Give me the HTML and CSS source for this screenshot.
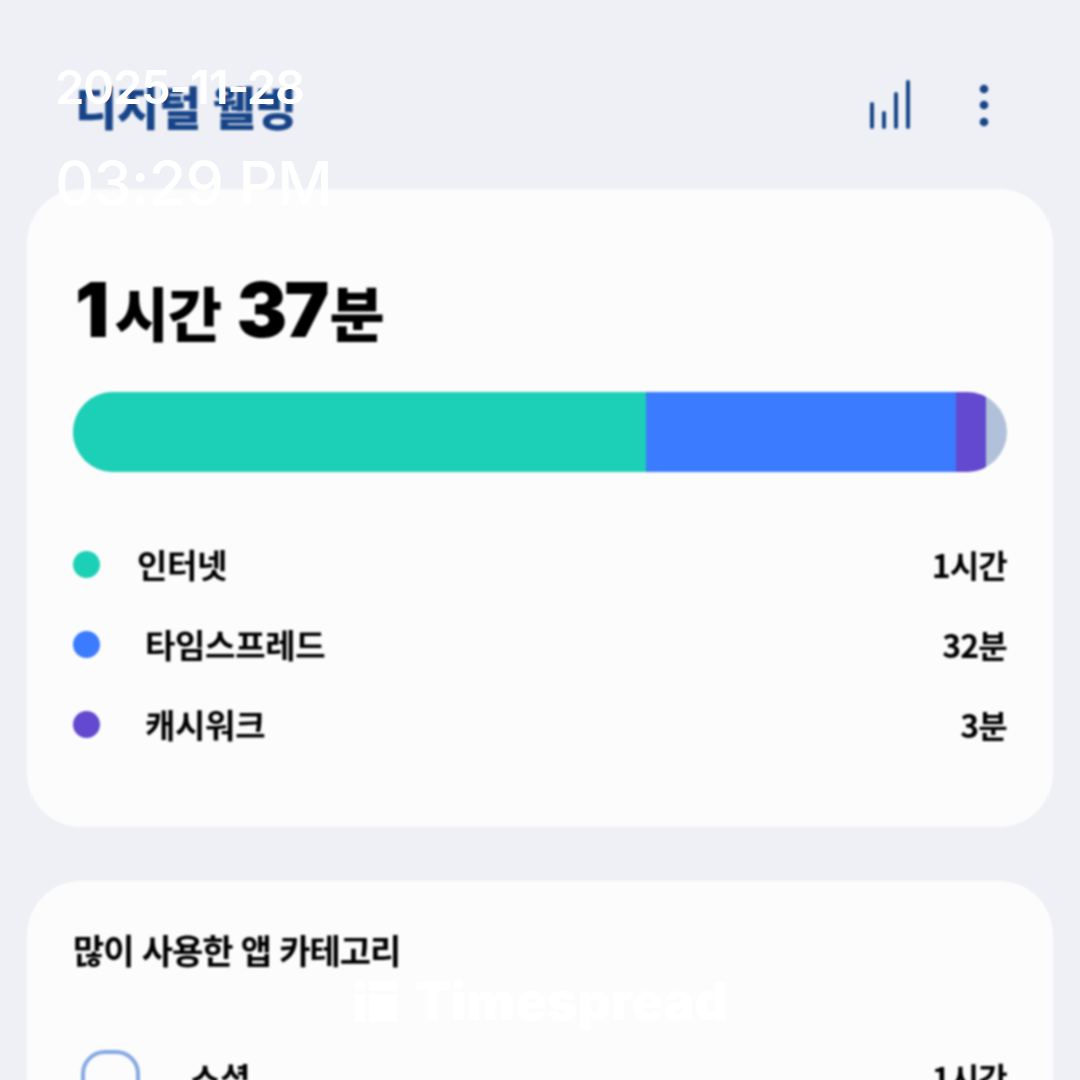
FILE: index.html
```html
<!DOCTYPE html>
<html lang="ko">
  <head>
    <meta charset="UTF-8" />
    <title>디지털 웰빙</title>
    <link rel="stylesheet" href="styles.css">
  </head>
  <body>
    <div class="stamp">
      <div class="stamp-date">2025-11-28</div>
      <div class="stamp-time">03:29 PM</div>
    </div>

    <div class="watermark">
      <svg class="watermark-icon" width="43" height="41" viewBox="0 0 43 41">
        <rect x="1" y="0" width="10" height="10" rx="3"></rect>
        <rect x="1" y="13" width="10" height="28"></rect>
        <rect x="15" y="0" width="28" height="10"></rect>
        <rect x="15" y="13" width="28" height="28"></rect>
      </svg>
      <span>Timespread</span>
    </div>

    <div class="page">
      <header class="top-bar">
        <h1>디지털 웰빙</h1>
        <div class="top-actions">
          <svg width="44" height="50" viewBox="0 0 44 50">
            <path d="M5 24V47M17 33V47M29 14V47M41 2V47" stroke="#174488" stroke-width="4" stroke-linecap="round" fill="none"></path>
          </svg>
          <svg class="more-icon" width="10" height="44" viewBox="0 0 10 44">
            <circle cx="5" cy="5" r="4.3" fill="#174488"></circle>
            <circle cx="5" cy="21" r="4.3" fill="#174488"></circle>
            <circle cx="5" cy="38" r="4.3" fill="#174488"></circle>
          </svg>
        </div>
      </header>

      <section class="card summary">
        <div class="total"><b>1</b>시간 <b>37</b><span class="total-unit">분</span></div>

        <div class="bar">
          <div class="seg seg-web"></div>
          <div class="seg seg-time"></div>
          <div class="seg seg-cash"></div>
        </div>

        <ul class="legend">
          <li>
            <span class="dot dot-web"></span>
            <span class="name">인터넷</span>
            <span class="value">1시간</span>
          </li>
          <li>
            <span class="dot dot-time"></span>
            <span class="name name-wide">타임스프레드</span>
            <span class="value">32분</span>
          </li>
          <li>
            <span class="dot dot-cash"></span>
            <span class="name name-wide">캐시워크</span>
            <span class="value">3분</span>
          </li>
        </ul>
      </section>

      <section class="card category">
        <h2>많이 사용한 앱 카테고리</h2>
        <div class="app-row">
          <span class="app-icon"></span>
          <span class="app-name">소셜</span>
          <span class="value">1시간</span>
        </div>
      </section>
    </div>
  </body>
</html>
```

FILE: styles.css
```css
html,
body {
  margin: 0;
  height: 1080px;
  overflow: hidden;
}

body {
  position: relative;
  font-family: "Noto Sans CJK KR", "Noto Sans", sans-serif;
  background-color: #eef0f5;
  color: #000;
}

/* the source capture is a soft upscale */
.page {
  padding: 0 27px;
  filter: blur(0.8px);
}

/* Header */
.top-bar {
  display: flex;
  justify-content: space-between;
  align-items: center;
  height: 189px;
  padding: 21px 64px 0 48px;
  box-sizing: border-box;
}

.top-bar h1 {
  margin: 0;
  font-size: 46px;
  font-weight: 900;
  letter-spacing: -0.5px;
  color: #174488;
}

.top-actions {
  display: flex;
  align-items: center;
  gap: 68px;
}

.more-icon {
  margin-top: 2px;
}

/* Cards */
.card {
  background-color: #fcfcfc;
  border-radius: 54px;
  padding: 0 46px;
}

.summary {
  height: 638px;
  margin-bottom: 54px;
  box-sizing: border-box;
  padding-top: 72px;
}

.total {
  font-size: 59px;
  font-weight: 900;
  line-height: 96px;
  letter-spacing: -1px;
  height: 96px;
  white-space: nowrap;
}

.total b {
  font-family: "Inter", sans-serif;
  font-size: 76px;
  font-weight: 900;
  letter-spacing: -3px;
}

.total b:first-child {
  margin: 0 8px 0 2px;
}

.total-unit {
  margin-left: 3px;
  font-size: 60px;
}

.bar {
  display: flex;
  height: 80px;
  margin-top: 35px;
  border-radius: 40px;
  overflow: hidden;
  background-color: #b1c1da;
}

.seg-web {
  width: 573px;
  background-color: #1bd0b6;
}

.seg-time {
  width: 310px;
  background-color: #3a7bff;
}

.seg-cash {
  width: 30px;
  background-color: #6349cf;
}

.legend {
  list-style: none;
  margin: 52px 0 0;
  padding: 0;
}

.legend li {
  display: flex;
  align-items: center;
  height: 80px;
}

.dot {
  width: 27px;
  height: 27px;
  border-radius: 50%;
  flex-shrink: 0;
}

.dot-web {
  background-color: #1bd0b6;
}

.dot-time {
  background-color: #3a7bff;
}

.dot-cash {
  background-color: #6349cf;
}

.name {
  margin-left: 37px;
  font-size: 33px;
  font-weight: 700;
  letter-spacing: -0.3px;
}

.name-wide {
  margin-left: 45px;
}

.value {
  margin-left: auto;
  font-size: 32px;
  font-weight: 700;
  letter-spacing: -0.8px;
}

/* Category card */
.category {
  height: 400px;
  padding-top: 44px;
  box-sizing: border-box;
}

.category h2 {
  margin: 0;
  font-size: 34px;
  font-weight: 700;
  line-height: 50px;
  letter-spacing: -1.1px;
}

.app-row {
  display: flex;
  align-items: flex-start;
  margin-top: 75px;
}

.app-icon {
  width: 59px;
  height: 59px;
  margin-left: 8px;
  border: 4px solid #85a9e2;
  border-radius: 24px;
  box-sizing: border-box;
}

.app-name {
  margin: 4px 0 0 50px;
  font-size: 33px;
  font-weight: 700;
}

.app-row .value {
  margin-top: 4px;
}

/* Overlays */
.stamp {
  position: absolute;
  left: 55px;
  top: 52px;
  z-index: 2;
  color: #fff;
  font-family: "Inter", sans-serif;
  font-size: 47px;
  font-weight: 600;
  line-height: 70px;
  letter-spacing: -1.2px;
}

.stamp-time {
  margin-top: 26px;
  font-size: 61px;
  font-weight: 500;
  letter-spacing: -0.8px;
}

.watermark {
  position: absolute;
  left: 354px;
  top: 970px;
  z-index: 2;
  display: flex;
  align-items: center;
  gap: 18px;
  color: #fff;
  font-family: "Inter", sans-serif;
  font-size: 52px;
  font-weight: 900;
}

.watermark-icon {
  fill: #fff;
}
```
